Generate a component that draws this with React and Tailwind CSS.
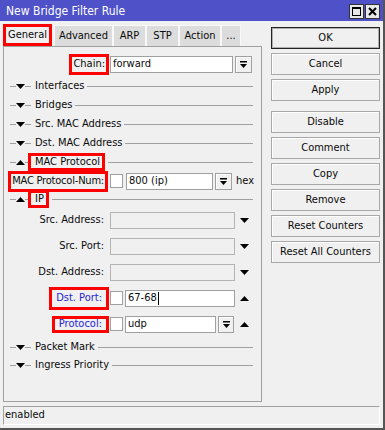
import React from "react";

const TriDown = () => (
  <svg width="9" height="5" viewBox="0 0 9 5" className="block shrink-0">
    <path d="M0 0H9L4.5 5Z" fill="#000" />
  </svg>
);
const TriUp = () => (
  <svg width="9" height="5" viewBox="0 0 9 5" className="block shrink-0">
    <path d="M0 5H9L4.5 0Z" fill="#000" />
  </svg>
);
const DropIcon = () => (
  <svg width="7" height="7" viewBox="0 0 7 7" className="block">
    <rect x="0" y="0" width="7" height="1.5" fill="#000" />
    <path d="M0 3H7L3.5 7Z" fill="#000" />
  </svg>
);

function DropBtn({ w = "w-[17px]" }) {
  return (
    <div className={`${w} h-[17px] ml-[2px] bg-[#f0f0f0] border border-[#a0a0a0] shadow-[inset_1px_1px_0_#fff] flex items-center justify-center shrink-0`}>
      <DropIcon />
    </div>
  );
}

function Section({ label, up, boxed, h = "h-[19px]" }) {
  return (
    <div className={`flex items-center ${h}`}>
      <div className="ml-[6px] w-[6px] h-px bg-[#a0a0a0]" />
      {up ? <TriUp /> : <TriDown />}
      <div className="w-[6px] h-px bg-[#a0a0a0]" />
      {boxed ? (
        <span className="relative -ml-[3px] h-[18px] border-[3px] border-[#f00] pl-[4px] pr-[2px] flex items-center whitespace-nowrap">
          {label}
        </span>
      ) : (
        <span className="ml-[4px] whitespace-nowrap">{label}</span>
      )}
      <div className="flex-1 h-px bg-[#a0a0a0] ml-[3px] mr-[8px]" />
    </div>
  );
}

function Label({ children, red, blue, box }) {
  return (
    <div className="w-[106px] shrink-0 flex justify-end items-center">
      {red ? (
        <span className={`border-[3px] border-[#f00] flex items-center mr-[1px] whitespace-nowrap ${box} ${blue ? "text-[#2626d6]" : ""}`}>
          {children}
        </span>
      ) : (
        <span className="pr-[6px] whitespace-nowrap">{children}</span>
      )}
    </div>
  );
}

const Check = () => (
  <div className="w-[13px] h-[14px] bg-white border border-[#a0a0a0] shrink-0" />
);

function Input({ w, children, disabled }) {
  return (
    <div className={`${w} h-[17px] shrink-0 border ${disabled ? "bg-[#f0f0f0] border-[#b4b4b4]" : "bg-white border-[#a0a0a0]"} flex items-center px-[2px] whitespace-nowrap`}>
      {children}
    </div>
  );
}

function Btn({ children, def, className = "" }) {
  return (
    <div
      className={`h-[22px] flex items-center justify-center bg-[#f0f0f0] border ${
        def ? "border-[#222] shadow-[inset_0_0_0_1px_#b0b0b0]" : "border-[#a8a8a8] shadow-[inset_1px_1px_0_#fff]"
      } ${className}`}
    >
      {children}
    </div>
  );
}

export default function App() {
  return (
    <div className="w-[385px] h-[430px] bg-[#f0f0f0] flex flex-col border-r-2 border-b-2 border-[#555] text-[11px] font-stretch-condensed text-[#0a0a0a] font-['DejaVu_Sans_Condensed','DejaVu_Sans',sans-serif] overflow-hidden">
      {/* Title bar */}
      <div className="h-[21px] shrink-0 bg-[#4e51c8] flex items-center pl-[6px] pt-[1px] text-white text-[12px]">
        <span className="flex-1">New Bridge Filter Rule</span>
        <div className="flex gap-px mr-[3px]">
          <div className="w-[15px] h-[15px] bg-[#e8e8e8] border border-[#333] flex items-center justify-center">
            <div className="w-[9px] h-[9px] border border-[#000] border-t-2" />
          </div>
          <div className="w-[15px] h-[15px] bg-[#e8e8e8] border border-[#333] flex items-center justify-center">
            <svg width="9" height="9" viewBox="0 0 9 9">
              <path d="M1 1L8 8M8 1L1 8" stroke="#000" strokeWidth="2" />
            </svg>
          </div>
        </div>
      </div>

      {/* Body */}
      <div className="h-[381px] shrink-0 flex px-[3px]">
        {/* left column */}
        <div className="w-[259px] flex flex-col pt-[3px]">
          <div className="h-[22px] flex items-end">
            <div className="w-[49px] h-[22px] border-[3px] border-[#f00] bg-[#f0f0f0] flex items-center justify-center">General</div>
            <div className="ml-[2px] w-[59px] h-[21px] bg-[#dcdcdc] border-t border-x border-[#f8f8f8] flex items-center justify-center">Advanced</div>
            <div className="w-[33px] h-[21px] bg-[#dcdcdc] border-t border-x border-[#f8f8f8] flex items-center justify-center">ARP</div>
            <div className="w-[33px] h-[21px] bg-[#dcdcdc] border-t border-x border-[#f8f8f8] flex items-center justify-center">STP</div>
            <div className="w-[42px] h-[21px] bg-[#dcdcdc] border-t border-x border-[#f8f8f8] flex items-center justify-center">Action</div>
            <div className="w-[20px] h-[21px] bg-[#dcdcdc] border-t border-x border-[#f8f8f8] flex items-center justify-center">...</div>
          </div>
          <div className="h-[356px] border border-[#a0a0a0] flex flex-col">
            {/* Chain */}
            <div className="mt-[6px] h-[22px] flex items-center">
              <Label red box="h-[21px] px-[1px]">Chain:</Label>
              <Input w="w-[123px]">forward</Input>
              <DropBtn />
            </div>
            <div className="mt-[2px]" />
            <Section label="Interfaces" />
            <Section label="Bridges" />
            <Section label="Src. MAC Address" />
            <Section label="Dst. MAC Address" />
            <Section label="MAC Protocol" up boxed h="h-[18px]" />
            {/* MAC protocol num */}
            <div className="h-[20px] flex items-center">
              <div className="w-[106px] shrink-0 flex justify-end items-center">
                <span className="border-[3px] border-[#f00] h-[21px] px-[1px] mr-[2px] tracking-[-0.2px] flex items-center whitespace-nowrap">MAC Protocol-Num:</span>
              </div>
              <Check />
              <Input w="w-[87px] ml-[3px]">800 (ip)</Input>
              <DropBtn />
              <span className="ml-[4px]">hex</span>
            </div>
            <Section label="IP" up boxed h="h-[16px]" />
            {/* Src Address */}
            <div className="h-[26px] flex items-center">
              <Label>Src. Address:</Label>
              <Input w="w-[125px]" disabled />
              <div className="ml-[5px]"><TriDown /></div>
            </div>
            <div className="h-[26px] flex items-center">
              <Label>Src. Port:</Label>
              <Input w="w-[125px]" disabled />
              <div className="ml-[5px]"><TriDown /></div>
            </div>
            <div className="h-[26px] flex items-center">
              <Label>Dst. Address:</Label>
              <Input w="w-[125px]" disabled />
              <div className="ml-[5px]"><TriDown /></div>
            </div>
            <div className="h-[26px] flex items-center">
              <Label red blue box="h-[23px] px-[4px]">Dst. Port:</Label>
              <Check />
              <Input w="w-[110px] ml-[2px]">
                <span>67-68</span>
                <span className="w-px h-[13px] bg-black ml-px" />
              </Input>
              <div className="ml-[5px]"><TriUp /></div>
            </div>
            <div className="h-[26px] flex items-center">
              <Label red blue box="h-[17px] px-[4px]">Protocol:</Label>
              <Check />
              <Input w="w-[91px] ml-[2px]">udp</Input>
              <DropBtn w="w-[16px]" />
              <div className="ml-[6px]"><TriUp /></div>
            </div>
            <div className="mt-[1px]" />
            <Section label="Packet Mark" h="h-[18px]" />
            <Section label="Ingress Priority" h="h-[18px]" />
          </div>
        </div>

        {/* right column */}
        <div className="ml-[9px] w-[109px] pt-[6px] flex flex-col gap-[4px]">
          <Btn def>OK</Btn>
          <Btn>Cancel</Btn>
          <Btn>Apply</Btn>
          <Btn className="mt-[6px]">Disable</Btn>
          <Btn>Comment</Btn>
          <Btn>Copy</Btn>
          <Btn>Remove</Btn>
          <Btn>Reset Counters</Btn>
          <Btn>Reset All Counters</Btn>
        </div>
      </div>

      {/* status */}
      <div className="mt-[4px] mx-[3px] h-[19px] shrink-0 border border-t-[#a0a0a0] border-l-[#a0a0a0] border-r-white border-b-white flex items-center pl-[1px]">
        enabled
      </div>
    </div>
  );
}
